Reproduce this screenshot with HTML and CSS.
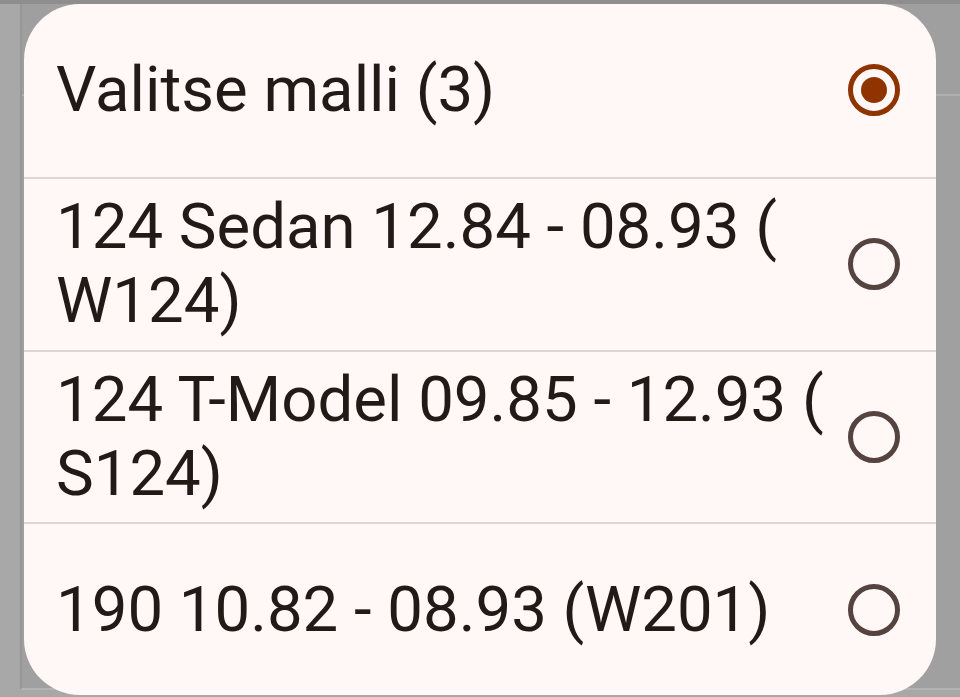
FILE: index.html
```html
<!DOCTYPE html>
<html lang="fi">
<head>
    <meta charset="UTF-8">
    <meta name="viewport" content="width=device-width, initial-scale=1.0">
    <title>Valitse malli</title>
    <link rel="stylesheet" href="styles.css">
</head>
<body>
    <!-- taustalla oleva näkymä, himmennetty -->
    <div class="backdrop">
        <div class="toolbar"></div>
    </div>

    <div class="dialog" role="radiogroup">
        <label class="option">
            <span class="option-text">Valitse malli (3)</span>
            <input type="radio" name="model" value="" checked>
            <span class="radio"></span>
        </label>
        <label class="option">
            <span class="option-text">124 Sedan 12.84 - 08.93 ( W124)</span>
            <input type="radio" name="model" value="w124">
            <span class="radio"></span>
        </label>
        <label class="option">
            <span class="option-text">124 T-Model 09.85 - 12.93 ( S124)</span>
            <input type="radio" name="model" value="s124">
            <span class="radio"></span>
        </label>
        <label class="option">
            <span class="option-text">190 10.82 - 08.93 (W201)</span>
            <input type="radio" name="model" value="w201">
            <span class="radio"></span>
        </label>
    </div>
</body>
</html>
```

FILE: styles.css
```css
body {
    margin: 0;
    height: 697px;
    overflow: hidden;
    background-color: #a8a8a8;
    border-top: 4px solid #8e8e8e;
    box-sizing: border-box;
    font-family: Roboto, "Noto Sans", sans-serif;
}

.backdrop {
    margin-left: 20px;
    height: 684px;
    background-color: #a0a0a0;
    border-left: 2px solid #979797;
    border-bottom: 2px solid #b4b4b4;
}

.toolbar {
    height: 90px;
    background-color: #9f9f9f;
    border-bottom: 2px solid #b0b0b0;
}

/* dialogi on näkymän päällä */
.dialog {
    position: absolute;
    left: 24px;
    top: 4px;
    width: 912px;
    height: 691px;
    display: grid;
    grid-template-rows: repeat(4, 1fr);
    background-color: #fff8f6;
    border-radius: 56px;
    overflow: hidden;
}

.option {
    display: flex;
    align-items: center;
    padding: 0 36px 0 32px;
    gap: 12px;
    border-top: 2px solid #ddd6d3;
    cursor: pointer;
}

.option:first-child {
    border-top: none;
}

.option-text {
    flex: 1;
    font-size: 63.5px;
    line-height: 74px;
    color: #221a17;
}

.option input {
    display: none;
}

.radio {
    width: 52px;
    height: 52px;
    box-sizing: border-box;
    border: 5px solid #54433e;
    border-radius: 50%;
    display: flex;
    align-items: center;
    justify-content: center;
    flex-shrink: 0;
}

.option input:checked + .radio {
    border-color: #8f3300;
}

.option input:checked + .radio::after {
    content: "";
    width: 26px;
    height: 26px;
    border-radius: 50%;
    background-color: #8f3300;
}
```
